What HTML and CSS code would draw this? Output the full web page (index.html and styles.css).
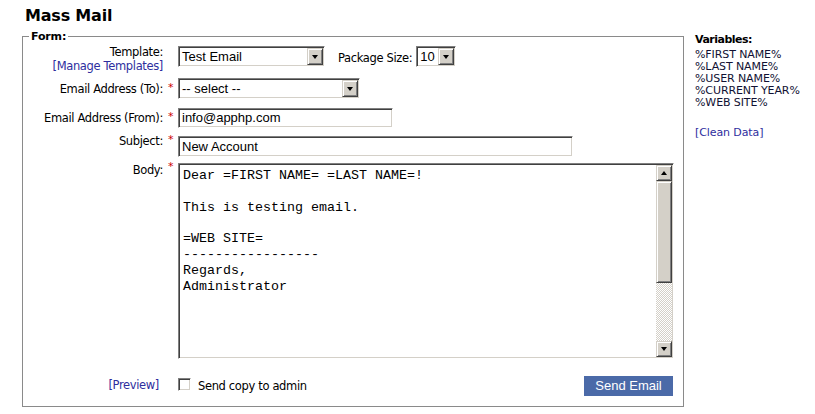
FILE: index.html
```html
<!DOCTYPE html>
<html>
<head>
<meta charset="utf-8">
<link rel="stylesheet" href="styles.css">
</head>
<body>
<div class="page">
  <div class="main">
    <h1 class="title">Mass Mail</h1>
    <fieldset class="form-box">
      <legend class="legend">Form:</legend>

      <div class="row row-template">
        <div class="label label-template">Template:<br><a class="link">[Manage Templates]</a></div>
        <div class="star"></div>
        <div class="field field-inline">
          <div class="select select-template"><span class="select-text">Test Email</span><span class="select-btn"><span class="tri-down"></span></span></div>
          <span class="pkg-label">Package Size:</span>
          <div class="select select-pkg"><span class="select-text">10</span><span class="select-btn"><span class="tri-down"></span></span></div>
        </div>
      </div>

      <div class="row row-to">
        <div class="label label-to">Email Address (To):</div>
        <div class="star">*</div>
        <div class="field">
          <div class="select select-to"><span class="select-text">-- select --</span><span class="select-btn"><span class="tri-down"></span></span></div>
        </div>
      </div>

      <div class="row row-from">
        <div class="label label-from">Email Address (From):</div>
        <div class="star">*</div>
        <div class="field">
          <div class="input input-from">info@apphp.com</div>
        </div>
      </div>

      <div class="row row-subject">
        <div class="label label-subject">Subject:</div>
        <div class="star star-up">*</div>
        <div class="field">
          <div class="input input-subject">New Account</div>
        </div>
      </div>

      <div class="row row-body">
        <div class="label label-body">Body:</div>
        <div class="star star-up">*</div>
        <div class="field">
          <div class="textarea">
            <div class="textarea-text">Dear =FIRST NAME= =LAST NAME=!

This is testing email.

=WEB SITE=
-----------------
Regards,
Administrator</div>
            <div class="scrollbar">
              <div class="sb-btn"><span class="tri-up-sm"></span></div>
              <div class="sb-thumb"></div>
              <div class="sb-track"></div>
              <div class="sb-btn"><span class="tri-down-sm"></span></div>
            </div>
          </div>
        </div>
      </div>

      <div class="row row-bottom">
        <div class="label label-preview"><a class="link">[Preview]</a></div>
        <div class="star"></div>
        <div class="field field-bottom">
          <span class="checkbox"></span>
          <span class="check-label">Send copy to admin</span>
          <span class="spacer"></span>
          <span class="btn-send">Send Email</span>
        </div>
      </div>
    </fieldset>
  </div>

  <aside class="vars">
    <div class="vars-title">Variables:</div>
    <div class="vars-item">%FIRST NAME%</div>
    <div class="vars-item">%LAST NAME%</div>
    <div class="vars-item">%USER NAME%</div>
    <div class="vars-item">%CURRENT YEAR%</div>
    <div class="vars-item">%WEB SITE%</div>
    <div class="vars-clean"><a class="link">[Clean Data]</a></div>
  </aside>
</div>
</body>
</html>
```

FILE: styles.css
```css
html, body {
  margin: 0;
  padding: 0;
  background: #ffffff;
}
body {
  font-family: "DejaVu Sans", Verdana, sans-serif;
  font-size: 11.5px;
  color: #000;
  letter-spacing: -0.35px;
}
.page {
  display: flex;
  align-items: flex-start;
  padding-top: 6px;
}
.main {
  padding-left: 22px;
}
.title {
  margin: 0 0 5px 3px;
  font-size: 16px;
  line-height: 19px;
  font-weight: bold;
  letter-spacing: -0.2px;
}
.form-box {
  box-sizing: border-box;
  width: 662px;
  margin: 0;
  padding: 3px 0 10px 0;
  border: 1px solid #8a8a8a;
}
.legend {
  margin-left: 6px;
  padding: 0 2px;
  font-weight: bold;
  font-size: 11px;
  line-height: 13px;
  letter-spacing: -0.15px;
}
.row {
  display: flex;
  align-items: flex-start;
}
.label {
  width: 140px;
  flex: none;
  text-align: right;
  line-height: 14px;
}
.star {
  width: 15px;
  flex: none;
  text-align: center;
  color: #cc0000;
  line-height: 14px;
  font-size: 11px;
}
.field {
  flex: none;
}
.link {
  color: #2e2e9e;
  text-decoration: none;
}

/* rows */
.row-template { height: 21px; }
.label-template { margin-top: -1px; }
.row-to { height: 21px; margin-top: 11px; }
.label-to { padding-top: 4px; }
.row-to .star { padding-top: 3px; }
.row-from { height: 20px; margin-top: 9px; }
.label-from { padding-top: 3px; }
.row-from .star { padding-top: 2px; }
.row-subject { height: 21px; margin-top: 8px; }
.label-subject { margin-top: -2px; }
.star-up { margin-top: -3px; }
.row-body { height: 196px; margin-top: 6px; }
.label-body { padding-top: 0; }
.row-bottom { height: 20px; margin-top: 17px; }
.label-preview { padding-top: 2px; padding-right: 4px; box-sizing: border-box; }

/* select */
.field-inline {
  display: flex;
  align-items: center;
}
.select {
  box-sizing: border-box;
  height: 21px;
  display: flex;
  align-items: stretch;
  border-style: solid;
  border-width: 1px;
  border-color: #808080 #ffffff #ffffff #808080;
  box-shadow: inset 1px 1px 0 #404040, inset -1px -1px 0 #d4d0c8;
  padding: 1px;
  background: #fff;
  font-family: "Liberation Sans", Arial, sans-serif;
  font-size: 13px;
  letter-spacing: 0;
}
.select-text {
  flex: 1;
  padding-left: 2px;
  line-height: 17px;
  white-space: nowrap;
  overflow: hidden;
}
.select-btn {
  width: 16px;
  flex: none;
  box-sizing: border-box;
  background: #d4d0c8;
  border-style: solid;
  border-width: 1px;
  border-color: #d4d0c8 #404040 #404040 #d4d0c8;
  box-shadow: inset 1px 1px 0 #ffffff, inset -1px -1px 0 #808080;
  display: flex;
  align-items: center;
  justify-content: center;
}
.tri-down {
  width: 0;
  height: 0;
  border-left: 3.5px solid transparent;
  border-right: 3.5px solid transparent;
  border-top: 4px solid #000;
}
.select-template { width: 147px; }
.select-pkg { width: 40px; }
.select-to { width: 182px; }
.pkg-label {
  margin-left: 13px;
  margin-right: 4px;
  padding-top: 2px;
}

/* inputs */
.input {
  box-sizing: border-box;
  border-style: solid;
  border-width: 1px;
  border-color: #808080 #ffffff #ffffff #808080;
  box-shadow: inset 1px 1px 0 #404040, inset -1px -1px 0 #d4d0c8;
  background: #fff;
  font-family: "Liberation Sans", Arial, sans-serif;
  font-size: 13px;
  letter-spacing: 0;
  padding: 0 0 0 3px;
  white-space: nowrap;
}
.input-from { width: 215px; height: 20px; line-height: 18px; }
.input-subject { width: 395px; height: 21px; line-height: 19px; }

/* textarea */
.textarea {
  box-sizing: border-box;
  width: 496px;
  height: 196px;
  display: flex;
  border-style: solid;
  border-width: 1px;
  border-color: #808080 #ffffff #ffffff #808080;
  box-shadow: inset 1px 1px 0 #404040, inset -1px -1px 0 #d4d0c8;
  padding: 1px;
  background: #fff;
}
.textarea-text {
  flex: 1;
  white-space: pre;
  font-family: "Liberation Mono", "Courier New", monospace;
  font-size: 13.33px;
  line-height: 15.86px;
  letter-spacing: 0;
  padding: 3px 0 0 3px;
  overflow: hidden;
}
.scrollbar {
  width: 16px;
  flex: none;
  display: flex;
  flex-direction: column;
}
.sb-btn, .sb-thumb {
  box-sizing: border-box;
  background: #d4d0c8;
  border-style: solid;
  border-width: 1px;
  border-color: #d4d0c8 #404040 #404040 #d4d0c8;
  box-shadow: inset 1px 1px 0 #ffffff, inset -1px -1px 0 #808080;
}
.sb-btn {
  height: 16px;
  flex: none;
  display: flex;
  align-items: center;
  justify-content: center;
}
.sb-thumb {
  height: 102px;
  flex: none;
}
.sb-track {
  flex: 1;
  background: repeating-conic-gradient(#ffffff 0 25%, #d4d0c8 0 50%) 0 0 / 2px 2px;
}
.tri-up-sm {
  width: 0;
  height: 0;
  border-left: 3.5px solid transparent;
  border-right: 3.5px solid transparent;
  border-bottom: 4px solid #000;
}
.tri-down-sm {
  width: 0;
  height: 0;
  border-left: 3.5px solid transparent;
  border-right: 3.5px solid transparent;
  border-top: 4px solid #000;
}

/* bottom row */
.field-bottom {
  width: 496px;
  height: 20px;
  display: flex;
  align-items: center;
}
.checkbox {
  box-sizing: border-box;
  width: 13px;
  height: 13px;
  margin-top: -4px;
  border-style: solid;
  border-width: 1px;
  border-color: #808080 #ffffff #ffffff #808080;
  box-shadow: inset 1px 1px 0 #404040, inset -1px -1px 0 #d4d0c8;
  background: #fff;
}
.check-label {
  margin-left: 7px;
  margin-top: 0;
}
.spacer { flex: 1; }
.btn-send {
  width: 89px;
  height: 20px;
  margin-right: 1px;
  background: #4b6aa8;
  color: #fff;
  font-family: "Liberation Sans", Arial, sans-serif;
  font-size: 13px;
  letter-spacing: 0;
  line-height: 20px;
  text-align: center;
}

/* sidebar */
.vars {
  margin-left: 11px;
  padding-top: 27px;
  font-size: 11px;
  letter-spacing: -0.1px;
}
.vars-title {
  font-weight: bold;
  line-height: 13px;
  margin-bottom: 3px;
  letter-spacing: -0.5px;
}
.vars-item {
  line-height: 12px;
  color: #111133;
}
.vars-clean {
  margin-top: 18px;
  line-height: 12px;
}
```
